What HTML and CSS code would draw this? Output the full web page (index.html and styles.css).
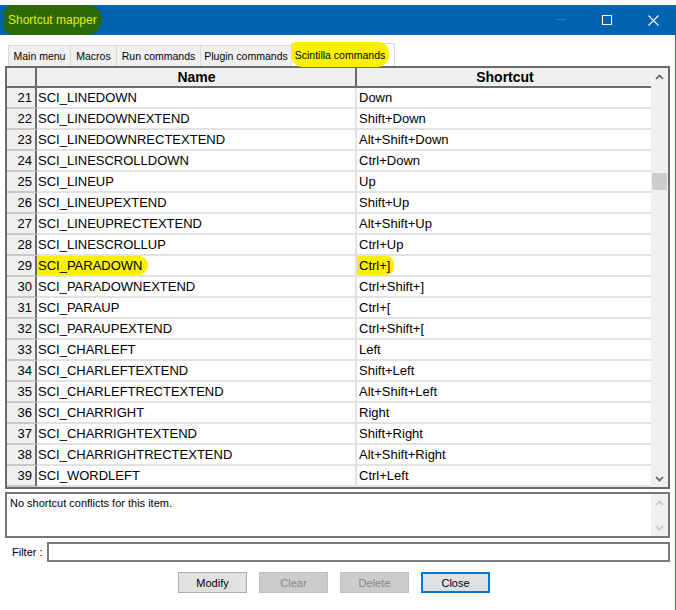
FILE: index.html
```html
<!DOCTYPE html>
<html>
<head>
<meta charset="utf-8">
<title>Shortcut mapper</title>
<link rel="stylesheet" href="styles.css">
</head>
<body>
<div class="window">
  <div class="titlebar">
    <div class="title"><span class="title-hl">Shortcut mapper</span></div>
    <div class="controls">
      <span class="ctl"><svg width="10" height="10" viewBox="0 0 10 10"><rect x="0" y="4" width="10" height="1" fill="#3b7dc1"/></svg></span>
      <span class="ctl"><svg width="10" height="10" viewBox="0 0 10 10"><rect x="0.5" y="0.5" width="9" height="9" fill="none" stroke="#ffffff" stroke-width="1"/></svg></span>
      <span class="ctl"><svg width="11" height="11" viewBox="0 0 11 11"><path d="M0.5 0.5L10.5 10.5M10.5 0.5L0.5 10.5" stroke="#ffffff" stroke-width="1.1" fill="none"/></svg></span>
    </div>
  </div>
  <div class="body">
    <div class="tabs">
      <div class="tab w1">Main menu</div>
      <div class="tab w2">Macros</div>
      <div class="tab w3">Run commands</div>
      <div class="tab w4">Plugin commands</div>
      <div class="tab active"><span class="tab-label">Scintilla commands</span></div>
    </div>
    <div class="grid">
      <div class="rows">
        <div class="row hdr">
          <div class="cell rh"></div>
          <div class="cell name">Name</div>
          <div class="cell sc">Shortcut</div>
        </div>
        <div class="row"><div class="cell rh">21</div><div class="cell name">SCI_LINEDOWN</div><div class="cell sc">Down</div></div>
        <div class="row"><div class="cell rh">22</div><div class="cell name">SCI_LINEDOWNEXTEND</div><div class="cell sc">Shift+Down</div></div>
        <div class="row"><div class="cell rh">23</div><div class="cell name">SCI_LINEDOWNRECTEXTEND</div><div class="cell sc">Alt+Shift+Down</div></div>
        <div class="row"><div class="cell rh">24</div><div class="cell name">SCI_LINESCROLLDOWN</div><div class="cell sc">Ctrl+Down</div></div>
        <div class="row"><div class="cell rh">25</div><div class="cell name">SCI_LINEUP</div><div class="cell sc">Up</div></div>
        <div class="row"><div class="cell rh">26</div><div class="cell name">SCI_LINEUPEXTEND</div><div class="cell sc">Shift+Up</div></div>
        <div class="row"><div class="cell rh">27</div><div class="cell name">SCI_LINEUPRECTEXTEND</div><div class="cell sc">Alt+Shift+Up</div></div>
        <div class="row"><div class="cell rh">28</div><div class="cell name">SCI_LINESCROLLUP</div><div class="cell sc">Ctrl+Up</div></div>
        <div class="row"><div class="cell rh">29</div><div class="cell name"><span class="mark mark-name">SCI_PARADOWN</span></div><div class="cell sc"><span class="mark mark-sc">Ctrl+]</span></div></div>
        <div class="row"><div class="cell rh">30</div><div class="cell name">SCI_PARADOWNEXTEND</div><div class="cell sc">Ctrl+Shift+]</div></div>
        <div class="row"><div class="cell rh">31</div><div class="cell name">SCI_PARAUP</div><div class="cell sc">Ctrl+[</div></div>
        <div class="row"><div class="cell rh">32</div><div class="cell name">SCI_PARAUPEXTEND</div><div class="cell sc">Ctrl+Shift+[</div></div>
        <div class="row"><div class="cell rh">33</div><div class="cell name">SCI_CHARLEFT</div><div class="cell sc">Left</div></div>
        <div class="row"><div class="cell rh">34</div><div class="cell name">SCI_CHARLEFTEXTEND</div><div class="cell sc">Shift+Left</div></div>
        <div class="row"><div class="cell rh">35</div><div class="cell name">SCI_CHARLEFTRECTEXTEND</div><div class="cell sc">Alt+Shift+Left</div></div>
        <div class="row"><div class="cell rh">36</div><div class="cell name">SCI_CHARRIGHT</div><div class="cell sc">Right</div></div>
        <div class="row"><div class="cell rh">37</div><div class="cell name">SCI_CHARRIGHTEXTEND</div><div class="cell sc">Shift+Right</div></div>
        <div class="row"><div class="cell rh">38</div><div class="cell name">SCI_CHARRIGHTRECTEXTEND</div><div class="cell sc">Alt+Shift+Right</div></div>
        <div class="row"><div class="cell rh">39</div><div class="cell name">SCI_WORDLEFT</div><div class="cell sc">Ctrl+Left</div></div>
      </div>
      <div class="vscroll">
        <div class="sbtn"><svg width="9" height="6" viewBox="0 0 9 6"><path d="M1 5L4.5 1.5L8 5" fill="none" stroke="#606060" stroke-width="1.6"/></svg></div>
        <div class="track"><div class="thumb"></div></div>
        <div class="sbtn"><svg width="9" height="6" viewBox="0 0 9 6"><path d="M1 1L4.5 4.5L8 1" fill="none" stroke="#606060" stroke-width="1.6"/></svg></div>
      </div>
    </div>
    <div class="info">
      <div class="info-text">No shortcut conflicts for this item.</div>
      <div class="info-scroll">
        <div class="sbtn"><svg width="9" height="6" viewBox="0 0 9 6"><path d="M1 5L4.5 1.5L8 5" fill="none" stroke="#c4c4c4" stroke-width="1.5"/></svg></div>
        <div class="sbtn"><svg width="9" height="6" viewBox="0 0 9 6"><path d="M1 1L4.5 4.5L8 1" fill="none" stroke="#c4c4c4" stroke-width="1.5"/></svg></div>
      </div>
    </div>
    <div class="filter">
      <label class="filter-label" for="flt">Filter :</label>
      <input id="flt" class="filter-input" type="text">
    </div>
    <div class="buttons">
      <button class="btn">Modify</button>
      <button class="btn disabled">Clear</button>
      <button class="btn disabled">Delete</button>
      <button class="btn default">Close</button>
    </div>
  </div>
</div>
</body>
</html>
```
FILE: styles.css
```css
* { box-sizing: border-box; }

body {
  margin: 0;
  background: #ffffff;
  font-family: "Liberation Sans", Arial, sans-serif;
  color: #000000;
}

.window {
  width: 676px;
  height: 610px;
  padding-top: 5px;
}

.titlebar {
  height: 30px;
  background: #0063b1;
  display: flex;
  align-items: center;
}

.title { flex: 1; }

.title-hl {
  display: inline-block;
  margin-left: 3px;
  height: 30px;
  line-height: 30px;
  padding: 0 5px;
  background: #2b6a07;
  color: #e0f000;
  font-size: 12px;
  border-radius: 10px 14px 16px 10px;
}

.controls {
  display: flex;
  height: 30px;
}

.ctl {
  width: 46px;
  height: 30px;
  display: flex;
  align-items: center;
  justify-content: center;
}

.body {
  height: 575px;
  border-right: 1px solid #2a6cb3;
  padding-left: 5px;
  padding-top: 8px;
}

/* tabs */
.tabs {
  display: flex;
  align-items: flex-end;
  height: 23px;
  padding-left: 3px;
}

.tab {
  height: 21px;
  border: 1px solid #d9d9d9;
  border-bottom: none;
  border-right: none;
  background: #f0f0f0;
  font-size: 10.5px;
  display: flex;
  align-items: center;
  justify-content: center;
  white-space: nowrap;
}

.w1 { width: 62px; }
.w2 { width: 46px; }
.w3 { width: 84px; }
.w4 { width: 91px; }

.tab.active {
  width: 104px;
  height: 23px;
  background: #ffffff;
  border-right: 1px solid #d9d9d9;
  position: relative;
  padding-right: 6px;
}

.tab.active::before {
  content: "";
  position: absolute;
  left: -1px;
  top: -2px;
  width: 98px;
  height: 25px;
  background: #fbf000;
  border-radius: 5px 10px 12px 12px;
}

.tab-label {
  position: relative;
}

/* grid */
.grid {
  width: 665px;
  border: 2px solid #6b6b6b;
  display: flex;
}

.rows { width: 644px; }

.row {
  display: grid;
  grid-template-columns: 30px 320px 294px;
  height: 21px;
}

.cell {
  border-bottom: 2px solid #e2e2e2;
  font-size: 13px;
  line-height: 19px;
  white-space: nowrap;
  overflow: hidden;
  padding-left: 1px;
}

.cell.rh {
  background: #f0f0f0;
  border-right: 2px solid #6b6b6b;
  border-bottom-color: #c9c9c9;
  text-align: right;
  padding-right: 3px;
}

.cell.name {
  border-right: 2px solid #e2e2e2;
}

.cell.sc { padding-left: 2px; }

.row.hdr { height: 20px; }

.row.hdr .cell {
  background: #f0f0f0;
  border-bottom: 2px solid #6b6b6b;
  font-size: 14px;
  font-weight: bold;
  line-height: 18px;
  text-align: center;
}

.row.hdr .cell.name { border-right-color: #6b6b6b; }

.mark {
  display: inline-block;
  height: 19px;
  background: #fbf000;
}

.mark-name {
  margin-left: -1px;
  padding: 0 5px 0 1px;
  border-radius: 0 9px 9px 0;
}

.mark-sc {
  margin-left: -2px;
  padding: 0 4px 0 2px;
  border-radius: 0 7px 7px 0;
}

/* scrollbars */
.vscroll {
  width: 17px;
  background: #f0f0f0;
  display: flex;
  flex-direction: column;
}

.sbtn {
  height: 17px;
  display: flex;
  align-items: center;
  justify-content: center;
}

.track { flex: 1; }

.thumb {
  margin-top: 88px;
  margin-left: 1px;
  width: 15px;
  height: 17px;
  background: #cdcdcd;
}

/* info box */
.info {
  margin-top: 3px;
  width: 665px;
  height: 46px;
  border: 2px solid #777777;
  display: flex;
}

.info-text {
  flex: 1;
  font-size: 11px;
  padding: 3px 3px;
}

.info-scroll {
  width: 17px;
  background: #f0f0f0;
  display: flex;
  flex-direction: column;
  justify-content: space-between;
}

/* filter */
.filter {
  margin-top: 4px;
  height: 20px;
  display: flex;
  align-items: center;
}

.filter-label {
  width: 42px;
  padding-left: 7px;
  font-size: 11px;
}

.filter-input {
  width: 623px;
  height: 20px;
  border: 2px solid #7a7a7a;
  margin: 0;
  padding: 0 3px;
  font-family: "Liberation Sans", Arial, sans-serif;
  font-size: 11px;
}

/* buttons */
.buttons {
  margin-top: 10px;
  padding-left: 173px;
  display: flex;
  gap: 12px;
}

.btn {
  width: 69px;
  height: 21px;
  margin: 0;
  padding: 0;
  background: #e1e1e1;
  border: 1px solid #adadad;
  font-family: "Liberation Sans", Arial, sans-serif;
  font-size: 11px;
  color: #000000;
}

.btn.disabled {
  background: #cccccc;
  border-color: #bfbfbf;
  color: #868686;
}

.btn.default {
  border: 2px solid #0078d7;
}
```
